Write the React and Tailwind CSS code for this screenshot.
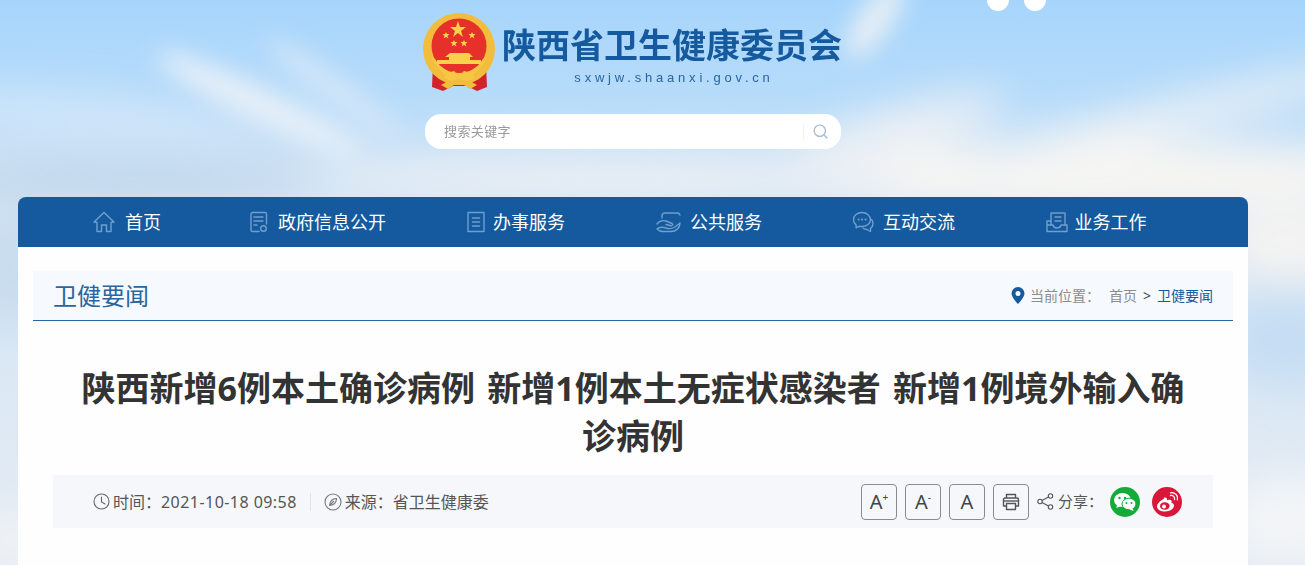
import { Search } from "lucide-react";

const navItems = [
  { label: "首页", icon: "home", cls: "gap-[10px]" },
  { label: "政府信息公开", icon: "doc", cls: "gap-[8px] pr-[8px]" },
  { label: "办事服务", icon: "list", cls: "gap-[6px]" },
  { label: "公共服务", icon: "hand", cls: "gap-[8px]" },
  { label: "互动交流", icon: "chat", cls: "gap-[9px] pl-[1px]" },
  { label: "业务工作", icon: "book", cls: "gap-[7px] pr-[2px]" },
];

function NavIcon({ name }) {
  const props = {
    width: 22,
    height: 22,
    viewBox: "0 0 22 22",
    fill: "none",
    stroke: "#6f9fcd",
    strokeWidth: 1.4,
    strokeLinejoin: "round",
    strokeLinecap: "round",
  };
  if (name === "home") {
    return (
      <svg {...props}>
        <path d="M1 11 11 1.500 21 11 18 11.500V20.500H13.500V14H8.500V20.500H4V11.500Z" />
      </svg>
    );
  }
  if (name === "doc") {
    return (
      <svg {...props}>
        <path d="M11 20.500H4.500a1.500 1.500 0 0 1-1.500-1.500V3a1.500 1.500 0 0 1 1.500-1.500H17A1.500 1.500 0 0 1 18.500 3V13" />
        <path d="M6 6h9M6 10h9M6 14h3" />
        <circle cx="15.500" cy="17.500" r="2.800" />
      </svg>
    );
  }
  if (name === "list") {
    return (
      <svg {...props}>
        <path d="M3 1.500H19V20.500H3Z" />
        <path d="M7.500 7H14.500M7.500 11H14.500M7.500 15H14.500" />
      </svg>
    );
  }
  if (name === "hand") {
    return (
      <svg width="26" height="22" viewBox="0 0 26 22" fill="none" stroke="#6f9fcd" strokeWidth="1.400" strokeLinecap="round" strokeLinejoin="round">
        <path d="M6 7V5a3 3 0 0 1 3-3h12a3 3 0 0 1 3 2" />
        <path d="M1 13c2-3 6-4 9-3l6 2.500c1.500.8.500 2.500-1 2.200L10 13.500" />
        <path d="M1 18c3-3 6-2 9-1s6 1 9-1l5-4c0 5-4 8.500-9 8.500H7c-2.500 0-4.500-1-6-2.500Z" />
      </svg>
    );
  }
  if (name === "chat") {
    return (
      <svg {...props}>
        <path d="M10 1.500c-4.800 0-8.500 3-8.500 7.200 0 2.200 1 4 2.600 5.300V17l3-1.800c1 .2 1.900.3 2.900.3 4.800 0 8.500-3 8.500-6.800S14.800 1.500 10 1.500Z" />
        <path d="M19.500 8.500c1 1 1.500 2.500 1.500 4 0 2-1 3.700-2.500 4.800V20.500L15 18.500c-1.500 0-3-.5-4-1.500" />
        <path d="M6.500 8.500h.1M10 8.500h.1M13.500 8.500h.1" strokeWidth="2" />
      </svg>
    );
  }
  return (
    <svg {...props}>
      <path d="M5 14V2H19V14" />
      <path d="M9 6H15M9 10H15" />
      <path d="M1 10H5M1 10V20.500H21V14H15c-.5 2-2 3-4 3s-3.500-1-4-3H1" />
    </svg>
  );
}

function Emblem() {
  return (
    <svg width="76" height="78" viewBox="0 0 76 78">
      <path d="M10 52 9 74 20 78 30 73H44L54 78 64 74 63 52Z" fill="#d3232a" />
      <circle cx="36" cy="36" r="36" fill="#f2bd3c" />
      <circle cx="36" cy="33" r="27.500" fill="#e5312a" />
      <path d="M8 44c6 14 18 22 28 22s22-8 28-22l-4 2C54 56 45 60 36 60S18 56 12 46Z" fill="#f6c744" />
      <polygon points="35,8 37,14 43,14 38,18 40,24 35,20 30,24 32,18 27,14 33,14" fill="#f8d24a" />
      <polygon points="23,19 24,21 26.500,21 24.500,23 25.500,25.500 23,24 20.500,25.500 21.500,23 19.500,21 22,21" fill="#f8d24a" />
      <polygon points="49,19 50,21 52.500,21 50.500,23 51.500,25.500 49,24 46.500,25.500 47.500,23 45.500,21 48,21" fill="#f8d24a" />
      <polygon points="31,27 32,29 34.500,29 32.500,31 33.500,33.500 31,32 28.500,33.500 29.500,31 27.500,29 30,29" fill="#f8d24a" />
      <polygon points="41,27 42,29 44.500,29 42.500,31 43.500,33.500 41,32 38.500,33.500 39.500,31 37.500,29 40,29" fill="#f8d24a" />
      <path d="M27 40H46L50 44H47V47H58V51H14V47H26V44H22Z" fill="#f8d24a" />
      <path d="M24 60 31 58 36 63 41 58 49 60 52 65 45 68 36 66 28 68 21 65Z" fill="#f6c744" />
      <path d="M18 72 25 68H47L54 72 47 76 41 72H31L25 76Z" fill="#f2bd3c" />
    </svg>
  );
}

function WechatIcon() {
  return (
    <svg width="22" height="18" viewBox="0 0 22 18" fill="#fff">
      <ellipse cx="8.500" cy="7" rx="8.500" ry="7" />
      <path d="M3 11 2.500 15 7 13Z" />
      <ellipse cx="15" cy="11" rx="7" ry="5.800" stroke="#14ab39" strokeWidth="1" />
      <path d="M18.500 15 19.500 18 15.500 16.500Z" />
      <circle cx="5.500" cy="5" r="1.200" fill="#14ab39" />
      <circle cx="11" cy="5" r="1.200" fill="#14ab39" />
      <circle cx="12.500" cy="10" r="1" fill="#14ab39" />
      <circle cx="17.500" cy="10" r="1" fill="#14ab39" />
    </svg>
  );
}

function WeiboIcon() {
  return (
    <svg width="22" height="20" viewBox="0 0 22 20" fill="none">
      <path d="M8.500 6.500C4.500 8.500 1 11.500 1 14.500 1 17.500 5 19.500 9 19.500c5 0 9-3 9-6 0-1.800-1.800-2.500-2.500-2.800.5-1.500.2-3-2-3-1 0-2.500.5-2.500.5.500-2-1-3.500-3.500-2.200Z" fill="#fff" />
      <ellipse cx="8.800" cy="14" rx="4.800" ry="3.800" fill="#d9173b" />
      <circle cx="8" cy="14.500" r="2" fill="#fff" />
      <path d="M14.500 3.500c2.500-.5 4.500 1.500 4 4M14.500.8c4.500-.8 7.800 2.800 6.800 7" stroke="#fff" strokeWidth="1.300" strokeLinecap="round" />
    </svg>
  );
}

// soft cloud picture behind the page
function Sky() {
  return (
    <svg className="absolute inset-0" width="1305" height="565" viewBox="0 0 1305 565">
      <defs>
        <linearGradient id="sky" x1="0" y1="0" x2="0" y2="1">
          <stop offset="0" stopColor="#a6d5fc" />
          <stop offset="0.18" stopColor="#b8dcfa" />
          <stop offset="0.3" stopColor="#d2e5f6" />
          <stop offset="1" stopColor="#e4ebf3" />
        </linearGradient>
        <filter id="b12" x="-50%" y="-200%" width="200%" height="500%"><feGaussianBlur stdDeviation="12" /></filter>
        <filter id="b20" x="-50%" y="-200%" width="200%" height="500%"><feGaussianBlur stdDeviation="20" /></filter>
      </defs>
      <rect width="1305" height="565" fill="url(#sky)" />
      <g filter="url(#b20)">
        <ellipse cx="120" cy="178" rx="190" ry="26" fill="#c3d8ec" />
        <ellipse cx="90" cy="120" rx="170" ry="24" fill="#cfe5f9" transform="rotate(6 90 120)" />
        <ellipse cx="1080" cy="178" rx="330" ry="34" fill="#f7f5f2" />
        <ellipse cx="1160" cy="120" rx="210" ry="16" fill="#eef2f5" transform="rotate(-14 1160 120)" />
        <ellipse cx="900" cy="130" rx="110" ry="22" fill="#eaeff5" transform="rotate(-16 900 130)" />
        <ellipse cx="620" cy="180" rx="300" ry="22" fill="#e9eef4" />
        <ellipse cx="1290" cy="340" rx="70" ry="45" fill="#c5ddf3" />
        <ellipse cx="1290" cy="245" rx="70" ry="35" fill="#f4f3f1" />
        <ellipse cx="1290" cy="520" rx="70" ry="45" fill="#f2f4f7" />
        <ellipse cx="10" cy="270" rx="40" ry="55" fill="#c7dbed" />
        <ellipse cx="10" cy="540" rx="40" ry="30" fill="#eff2f5" />
      </g>
      <g filter="url(#b12)">
        <ellipse cx="260" cy="105" rx="115" ry="17" fill="#e6eff8" transform="rotate(26 260 105)" />
        <ellipse cx="335" cy="90" rx="85" ry="13" fill="#d3e6f8" transform="rotate(36 335 90)" />
        <ellipse cx="875" cy="20" rx="16" ry="45" fill="#e9eff5" transform="rotate(35 875 20)" />
      </g>
    </svg>
  );
}

export default function App() {
  return (
    <div className="relative h-[565px] w-[1305px] overflow-hidden font-['Noto_Sans','Noto_Sans_CJK_SC',sans-serif]">
      <Sky />

      {/* two round buttons cut off by the top of the page */}
      <div className="absolute right-[259px] top-[-11px] flex gap-[15px]">
        <div className="h-[22px] w-[22px] rounded-full bg-white" />
        <div className="h-[22px] w-[22px] rounded-full bg-white" />
      </div>

      <header className="relative flex h-[197px] w-[1266px] flex-col items-center">
        <div className="ml-[-3px] flex pt-[13px]">
          <div className="ml-[2px]"><Emblem /></div>
          <div className="ml-[3px] flex flex-col items-center">
            <h1 className="mt-[9px] text-[34px] font-bold leading-[46px] text-[#155a9e]">陕西省卫生健康委员会</h1>
            <p className="mt-[1px] pl-[4px] text-[13px] leading-[18px] tracking-[3.800px] text-[#2a659f] font-['Liberation_Sans',sans-serif]">sxwjw.shaanxi.gov.cn</p>
          </div>
        </div>
        <div className="mt-[23px] flex h-[35px] w-[416px] items-center rounded-[16px] bg-white pl-[19px] pr-[12px]">
          <span className="flex-1 text-[13px] tracking-[0.400px] text-[#9a9a9a]">搜索关键字</span>
          <span className="mr-[8px] h-[16px] w-px bg-[#f1f1f1]" />
          <Search size={17} strokeWidth={2} className="text-[#a9bdd0]" />
        </div>
      </header>

      <main className="relative ml-[18px] w-[1230px]">
        <nav className="flex h-[50px] items-center rounded-t-[8px] bg-[#155a9e] pl-[12px]">
          {navItems.map((item) => (
            <a key={item.label} className={`flex w-[194px] items-center justify-center ${item.cls} text-[18px] text-white`}>
              <NavIcon name={item.icon} />
              <span>{item.label}</span>
            </a>
          ))}
        </nav>

        <div className="h-[318px] bg-[#fefefe] px-[15px] pt-[24px]">
          <div className="flex h-[50px] items-center justify-between border-b border-[#2a659f] bg-[#f6f9fd] pl-[20px] pr-[20px]">
            <h2 className="text-[24px] text-[#2a659f]">卫健要闻</h2>
            <div className="flex items-center text-[14px] text-[#8c8c8c]">
              <svg width="14" height="17" viewBox="0 0 14 17" className="mr-[5px]">
                <path fillRule="evenodd" d="M7 0a6.500 6.500 0 0 1 6.500 6.500C13.500 10.500 7 17 7 17S.5 10.500.5 6.500A6.500 6.500 0 0 1 7 0Zm0 4a2.500 2.500 0 1 0 0 5 2.500 2.500 0 0 0 0-5Z" fill="#155a9e" />
              </svg>
              <span>当前位置：</span>
              <span className="ml-[9px]">首页</span>
              <span className="mx-[6px] text-[#444]">&gt;</span>
              <span className="text-[#155a9e]">卫健要闻</span>
            </div>
          </div>

          <h1 className="mx-auto mt-[43px] w-[1120px] text-center text-[34px] font-bold leading-[48px] [word-spacing:3.500px] text-[#333]">
            陕西新增6例本土确诊病例 新增1例本土无症状感染者 新增1例境外输入确诊病例
          </h1>

          <div className="mx-[20px] mt-[15px] flex h-[53px] items-center bg-[#f5f7fb] pl-[40px] text-[16px] text-[#555]">
            <svg width="17" height="17" viewBox="0 0 17 17" fill="none" stroke="#666" strokeWidth="1.100" strokeLinecap="round" className="mr-[3px]">
              <circle cx="8.500" cy="8.500" r="7.500" />
              <path d="M8.500 4V9L12 11" />
            </svg>
            <span>时间：<span className="tracking-[0.450px]">2021-10-18 09:58</span></span>
            <span className="mx-[13px] h-[18px] w-px bg-[#e4e4e4]" />
            <svg width="18" height="18" viewBox="0 0 18 18" fill="none" stroke="#777" strokeWidth="1.100" className="mr-[3px]">
              <circle cx="9" cy="9" r="8" />
              <path d="M5.500 12.500C6 8 9 5.500 12.500 5.500 12.500 9.500 10 12 5.500 12.500ZM6 12 10 8" />
            </svg>
            <span>来源：省卫生健康委</span>

            <div className="ml-auto mr-[31px] flex items-center">
              <div className="flex gap-[8px]">
                <button className="flex h-[36px] w-[36px] items-center justify-center rounded-[4px] border border-[#8a8a8a] text-[20px] text-[#444]">A<sup className="text-[10px]">+</sup></button>
                <button className="flex h-[36px] w-[36px] items-center justify-center rounded-[4px] border border-[#8a8a8a] text-[20px] text-[#444]">A<sup className="text-[10px]">-</sup></button>
                <button className="flex h-[36px] w-[36px] items-center justify-center rounded-[4px] border border-[#8a8a8a] text-[20px] text-[#444]">A</button>
                <button className="flex h-[36px] w-[36px] items-center justify-center rounded-[4px] border border-[#8a8a8a]">
                  <svg width="18" height="18" viewBox="0 0 18 18" fill="none" stroke="#555" strokeWidth="1.400" strokeLinejoin="round">
                    <path d="M4.500 5V1.500H13.500V5" />
                    <path d="M4 13H1.500V6.500A1.500 1.500 0 0 1 3 5H15a1.500 1.500 0 0 1 1.500 1.500V13H14" />
                    <path d="M4.500 10.500H13.500V16.500H4.500Z" />
                    <path d="M1.500 8H16.500" />
                  </svg>
                </button>
              </div>
              <svg width="17" height="17" viewBox="0 0 17 17" fill="none" stroke="#555" strokeWidth="1.100" className="ml-[8px] mr-[4px]">
                <circle cx="3" cy="8.500" r="2.200" />
                <circle cx="13.500" cy="3" r="2.200" />
                <circle cx="13.500" cy="14" r="2.200" />
                <path d="M5 7.500 11.500 4M5 9.500 11.500 13" />
              </svg>
              <span className="text-[15px]">分享：</span>
              <span className="ml-[7px] flex h-[30px] w-[30px] items-center justify-center rounded-full bg-[#14ab39]"><WechatIcon /></span>
              <span className="ml-[12px] flex h-[30px] w-[30px] items-center justify-center rounded-full bg-[#d9173b]"><WeiboIcon /></span>
            </div>
          </div>
        </div>
      </main>
    </div>
  );
}
